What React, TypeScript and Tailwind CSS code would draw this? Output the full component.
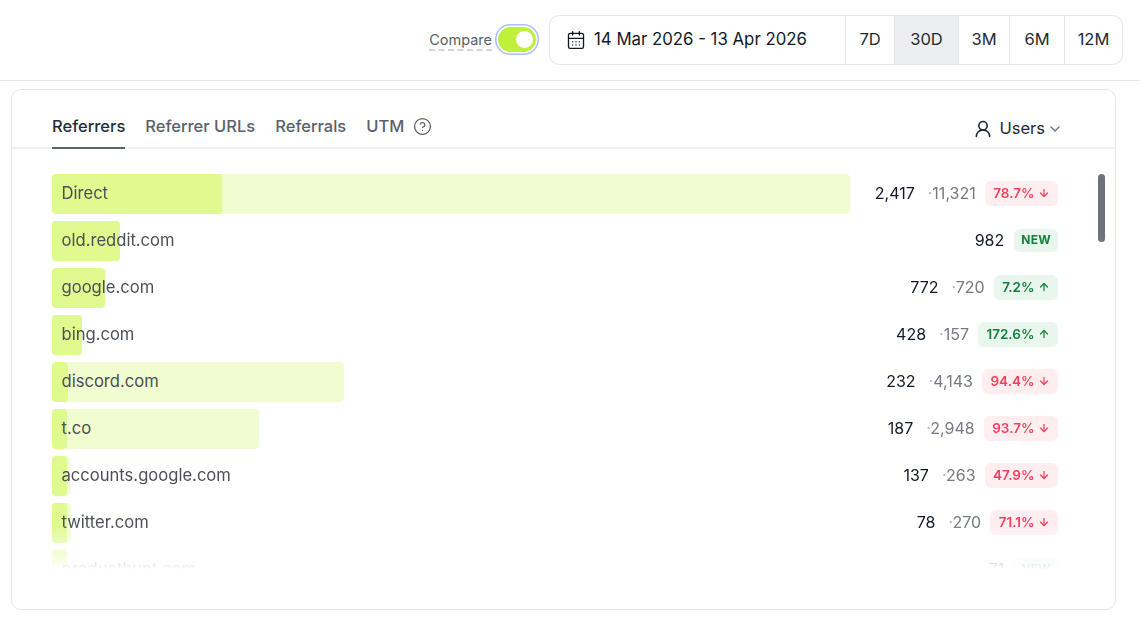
import { ArrowDown, ArrowUp, CalendarDays, ChevronDown, CircleHelp, UserRound } from 'lucide-react'

interface Referrer {
  name: string
  value: string
  previous?: string
  change?: string
  up?: boolean
  fill: number
  total: number
}

const referrers: Referrer[] = [
  { name: 'Direct', value: '2,417', previous: '11,321', change: '78.7%', fill: 170, total: 798 },
  { name: 'old.reddit.com', value: '982', fill: 68, total: 0 },
  { name: 'google.com', value: '772', previous: '720', change: '7.2%', up: true, fill: 53, total: 0 },
  { name: 'bing.com', value: '428', previous: '157', change: '172.6%', up: true, fill: 30, total: 0 },
  { name: 'discord.com', value: '232', previous: '4,143', change: '94.4%', fill: 16, total: 292 },
  { name: 't.co', value: '187', previous: '2,948', change: '93.7%', fill: 15, total: 207 },
  { name: 'accounts.google.com', value: '137', previous: '263', change: '47.9%', fill: 15, total: 18 },
  { name: 'twitter.com', value: '78', previous: '270', change: '71.1%', fill: 15, total: 19 },
  { name: 'producthunt.com', value: '71', fill: 15, total: 0 },
]

const ranges = [
  { label: '7D', width: 'w-[49px]' },
  { label: '30D', width: 'w-[64px]', active: true },
  { label: '3M', width: 'w-[51px]' },
  { label: '6M', width: 'w-[55px]' },
  { label: '12M', width: 'w-[58px]' },
]

const Row = ({ item }: { item: Referrer }) => (
  <div className="relative flex h-10 items-center justify-between pb-[2px] pl-[9.5px]">
    <div className="absolute left-0 top-0 h-10 rounded bg-[#f1fdd0]" style={{ width: item.total }} />
    <div className="absolute left-0 top-0 h-10 rounded bg-[#dffa8f]" style={{ width: item.fill }} />
    <span className="relative text-[16.6px] text-[#4b5058]">{item.name}</span>
    <div className="relative flex items-center text-[16px]">
      <span className="text-[#111827]">{item.value}</span>
      {item.previous && <span className="ml-[13px] text-[#747a83]"><span className="text-[#b0b4ba]">·</span>{item.previous}</span>}
      {item.change ? (
        <span className={`ml-[9px] flex h-[25px] items-center gap-[3px] rounded-md px-[8.5px] text-[13.5px] font-semibold ${item.up ? 'bg-[#e9f6ed] text-[#15803d]' : 'bg-[#ffeef0] text-[#f43f5e]'}`}>
          {item.change}
          {item.up ? <ArrowUp size={12} strokeWidth={2.5} /> : <ArrowDown size={12} strokeWidth={2.5} />}
        </span>
      ) : (
        <span className="ml-[10px] flex h-[23px] items-center rounded-md bg-[#e9f6ed] px-[7px] text-[12px] font-bold tracking-wide text-[#15803d]">NEW</span>
      )}
    </div>
  </div>
)

const App = () => {
  return (
    <div className="h-[625px] w-[1140px] overflow-hidden bg-white font-['Inter',sans-serif] text-[#1f2b33]">
      <header className="flex h-[81px] items-center justify-end border-b border-[#e5e7eb] pb-[1px] pr-[17px]">
        <span className="mt-[2px] border-b-2 border-dashed border-[#d1d5db] text-[14.5px] leading-[19px] text-[#5b6169]">Compare</span>
        <div className="ml-[6px] mr-[13px] flex h-[25px] w-[38px] items-center justify-end rounded-full bg-[#bef03c] pr-[3px] shadow-[0_0_0_1.5px_#fff,0_0_0_3px_#a8c1f5]">
          <div className="h-[17px] w-[17px] rounded-full bg-white" />
        </div>
        <div className="flex h-[50px] items-stretch overflow-hidden rounded-[10px] border border-[#e5e7eb]">
          <div className="flex w-[295px] items-center gap-[8px] pl-4 pt-[1px] text-[16.8px] text-[#111827]">
            <CalendarDays size={20} strokeWidth={1.6} />
            14 Mar 2026 - 13 Apr 2026
          </div>
          {ranges.map((range) => (
            <div
              key={range.label}
              className={`flex items-center justify-center border-l border-[#e5e7eb] text-[16.5px] ${range.width} ${range.active ? 'bg-[#eceef0]' : ''}`}
            >
              {range.label}
            </div>
          ))}
        </div>
      </header>

      <section className="relative mx-[11px] mt-2 h-[521px] w-[1105px] rounded-[10px] border border-[#e5e7eb]">
        <div className="flex h-[59px] items-end justify-between border-b-2 border-[#eef0f3] pl-10 pr-[52px]">
          <div className="flex items-end gap-5 text-[16.5px] font-medium text-[#5b6169]">
            <span className="-mb-[2px] border-b-2 border-[#5b6169] pb-[8px] text-[#1f2f38]">Referrers</span>
            <span className="pb-[8px]">Referrer URLs</span>
            <span className="pb-[8px]">Referrals</span>
            <span className="flex items-center gap-[9px] pb-[8px]">UTM <CircleHelp size={19} strokeWidth={1.6} /></span>
          </div>
          <div className="flex items-center gap-[2px] pb-[6px] text-[16.5px] text-[#1f2937]">
            <UserRound size={20} strokeWidth={1.9} />
            <span className="ml-[4px]">Users</span>
            <ChevronDown size={16} className="text-[#6b7280]" />
          </div>
        </div>

        <div className="h-[421px] overflow-hidden pl-10 pr-[57px] pt-[25px] [mask-image:linear-gradient(to_bottom,black_calc(100%-45px),transparent_100%)]">
          <div className="flex flex-col gap-[7px]">
            {referrers.map((item) => (
              <Row key={item.name} item={item} />
            ))}
          </div>
        </div>

        <div className="absolute left-[1086px] top-[84px] h-[68px] w-[7px] rounded-full bg-[#6e737b]" />
      </section>
    </div>
  )
}

export default App
